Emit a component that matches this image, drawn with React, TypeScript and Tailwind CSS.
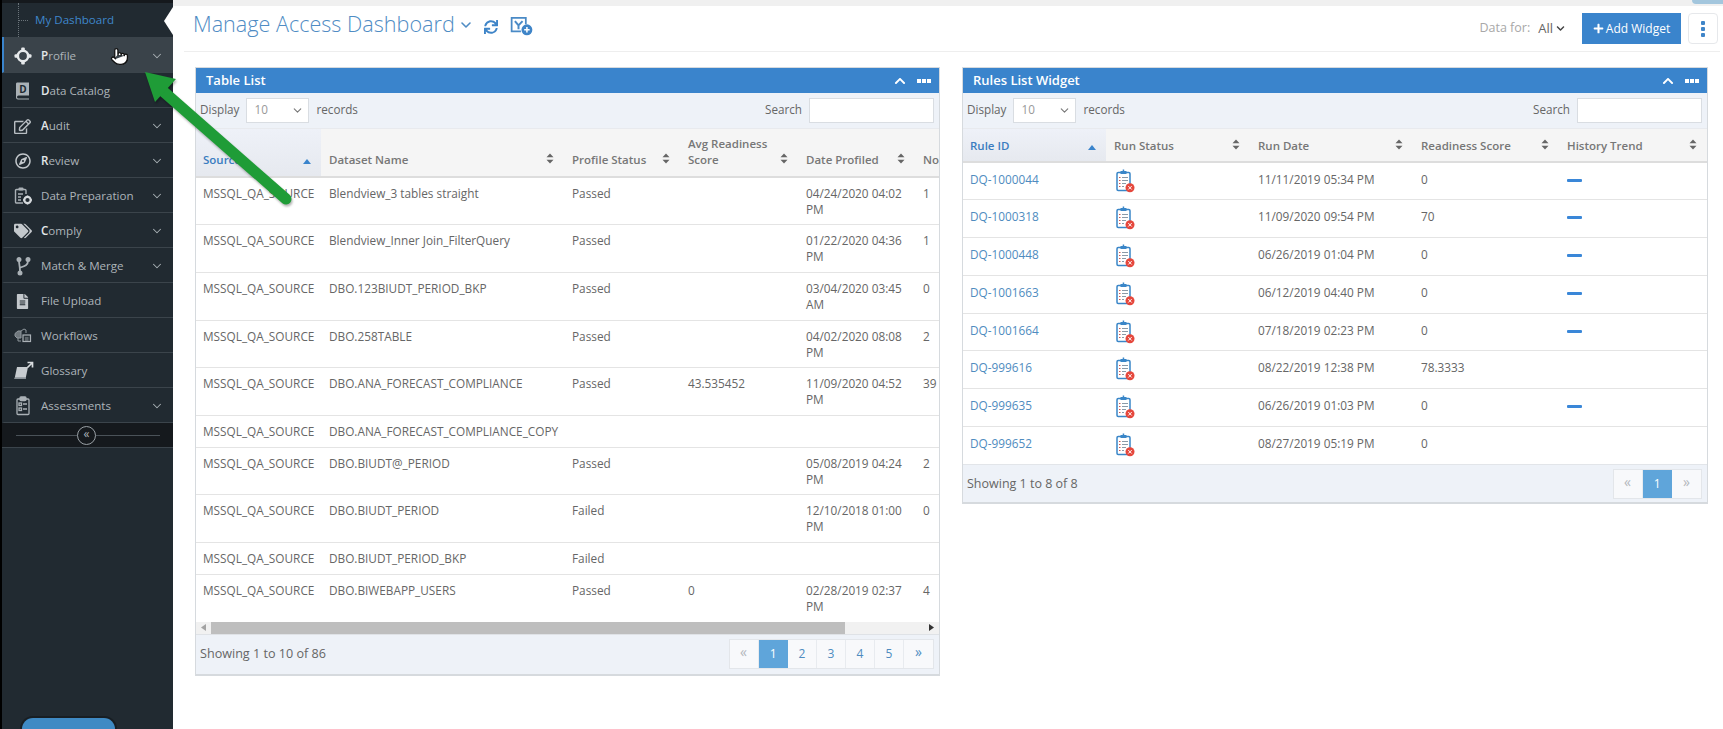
import React from "react";
import { ChevronDown, Pointer } from "lucide-react";
import { FaRegEdit, FaRegCompass, FaTags, FaFileAlt, FaSync, FaPlus, FaChevronUp, FaChevronDown } from "react-icons/fa";

const ProfileIcon = () => (
  <svg width="18" height="18" viewBox="0 0 18 18">
    <circle cx="9" cy="9" r="5.200" fill="none" stroke="#e6e9eb" strokeWidth="2.600" />
    <rect x="7.200" y="0.500" width="3.600" height="4" rx="1" fill="#e6e9eb" />
    <rect x="7.200" y="13.500" width="3.600" height="4" rx="1" fill="#e6e9eb" />
    <rect x="0.500" y="7.200" width="4" height="3.600" rx="1" fill="#e6e9eb" />
    <rect x="13.500" y="7.200" width="4" height="3.600" rx="1" fill="#e6e9eb" />
  </svg>
);
const CatalogIcon = () => (
  <svg width="18" height="20" viewBox="0 0 18 20">
    <path d="M3 1.500h12v13H4.500a1.500 1.500 0 0 0 0 3H15v1H4a2 2 0 0 1-2-2V3a1.500 1.500 0 0 1 1-1.500z" fill="#aab1b6" />
    <text x="9" y="12" textAnchor="middle" fontSize="10" fontWeight="700" fill="#212a31" fontFamily="'Open Sans',sans-serif">D</text>
  </svg>
);
const PrepIcon = () => (
  <svg width="20" height="20" viewBox="0 0 20 20" fill="none">
    <path d="M10 17H3.500A1 1 0 0 1 2.500 16V4.500a1 1 0 0 1 1-1H12a1 1 0 0 1 1 1V8" stroke="#a9b0b5" strokeWidth="1.400" />
    <rect x="5.500" y="1.500" width="5" height="3" rx="1" fill="#a9b0b5" />
    <path d="M5 8h5M5 11h3M5 14h3" stroke="#a9b0b5" strokeWidth="1.300" />
    <circle cx="14.500" cy="14" r="3.200" stroke="#d5d9dc" strokeWidth="2.200" />
    <path d="M14.500 9.500v1.500M14.500 17v1.500M10 14h1.500M17.500 14H19" stroke="#d5d9dc" strokeWidth="1.500" />
  </svg>
);
const MergeIcon = () => (
  <svg width="18" height="20" viewBox="0 0 18 20" fill="none" stroke="#aab1b6" strokeWidth="1.800">
    <circle cx="5" cy="3.500" r="1.600" fill="#aab1b6" />
    <circle cx="14" cy="3.500" r="1.600" fill="#aab1b6" />
    <circle cx="6" cy="17" r="1.600" fill="#aab1b6" />
    <path d="M5 5c0 3 1 5 1 10.500M14 5c0 4-3 5-7.500 6.500" />
  </svg>
);
const WorkflowIcon = () => (
  <svg width="18" height="16" viewBox="0 0 18 16" fill="none" stroke="#8f979d" strokeWidth="1">
    <path d="M1 5.500 4 3h3v7H3L1 8z" fill="#6f777d" />
    <path d="M7 3l3-2 2 1v3" />
    <rect x="9" y="7" width="7.500" height="6.500" fill="#2a3339" stroke="#aab1b6" strokeWidth="1.200" />
    <path d="M11 10h3.500M11 12h3.500" />
    <path d="M4 10v3h3" />
  </svg>
);
const GlossaryIcon = () => (
  <svg width="22" height="22" viewBox="0 0 22 22">
    <path d="M5 7h11l-2.500 12H2.500z" fill="#c7ccd0" />
    <path d="M2.500 19h11l.5-1.700H3z" fill="#8a9298" />
    <path d="M15.500 2.500h5v5M20.500 2.500l-5 5" fill="none" stroke="#d8dcdf" strokeWidth="1.700" />
  </svg>
);
const AssessIcon = () => (
  <svg width="16" height="20" viewBox="0 0 16 20" fill="none" stroke="#aab1b6" strokeWidth="1.300">
    <rect x="2" y="3" width="12" height="15.500" rx="1" />
    <rect x="5" y="1" width="6" height="3.500" rx="1" fill="#aab1b6" />
    <rect x="4" y="7" width="2.500" height="2.500" />
    <rect x="4" y="12" width="2.500" height="2.500" />
    <path d="M8 8h4M8 13h4" />
  </svg>
);

const SortBoth = () => (
  <svg width="8" height="11" viewBox="0 0 8 11" className="shrink-0">
    <path d="M4 0.500 7.500 4.300H.5zM4 10.500.5 6.700h7z" fill="#666" />
  </svg>
);
const SortUp = () => (
  <svg width="8" height="5" viewBox="0 0 8 5" className="shrink-0">
    <path d="M4 0 8 5H0z" fill="#3a84cc" />
  </svg>
);
const StatusIcon = () => (
  <svg width="19" height="24" viewBox="0 0 19 24" fill="none">
    <rect x="1" y="3.500" width="13" height="18" rx="1.200" fill="#fff" stroke="#3a86c8" strokeWidth="1.500" />
    <rect x="4.500" y="2" width="6" height="3" fill="#3a86c8" />
    <rect x="6.700" y="0.500" width="1.500" height="2" fill="#3a86c8" />
    <path d="M6 8.500h6M6 11.500h6M6 14.500h4M6 17.500h2" stroke="#8a9aa8" strokeWidth="1.100" />
    <path d="M3 8.500h1.500M3 11.500h1.500M3 14.500h1.500M3 17.500h1.500" stroke="#d0564f" strokeWidth="1.200" />
    <circle cx="14" cy="18.800" r="4.500" fill="#e5473c" />
    <path d="M12.300 17.100l3.400 3.400M15.700 17.100l-3.400 3.400" stroke="#fff" strokeWidth="1" />
  </svg>
);

const MENU: { label: string; icon: React.ReactNode; chevron: boolean; bright?: boolean; active?: boolean }[] = [
  { label: "Profile", icon: <ProfileIcon />, chevron: true, bright: true, active: true },
  { label: "Data Catalog", icon: <CatalogIcon />, chevron: false, bright: true },
  { label: "Audit", icon: <FaRegEdit size={17} color="#b8bec3" />, chevron: true, bright: true },
  { label: "Review", icon: <FaRegCompass size={16} color="#c3c8cc" />, chevron: true, bright: true },
  { label: "Data Preparation", icon: <PrepIcon />, chevron: true },
  { label: "Comply", icon: <FaTags size={18} color="#c3c8cc" />, chevron: true, bright: true },
  { label: "Match & Merge", icon: <MergeIcon />, chevron: true },
  { label: "File Upload", icon: <FaFileAlt size={15} color="#c3c8cc" />, chevron: false },
  { label: "Workflows", icon: <WorkflowIcon />, chevron: false },
  { label: "Glossary", icon: <GlossaryIcon />, chevron: false },
  { label: "Assessments", icon: <AssessIcon />, chevron: true },
];

function MenuRow({ item }: { item: (typeof MENU)[number] }) {
  return (
    <div
      className={`shrink-0 pt-[2px] flex items-center border-b border-[#3b444b] ${
        item.active ? "h-[36px] bg-[#3a434a] border-l-2 border-l-[#3a84cc]" : "h-[35px] border-l-2 border-l-transparent"
      }`}
    >
      <span className="w-[36px] pl-[1px] flex justify-center shrink-0">{item.icon}</span>
      <span className="text-[11.6px] leading-none text-[#adb4b9] whitespace-nowrap ml-[1px]">
        {item.bright ? (
          <>
            <span className="text-[#e4e7e9] font-semibold">{item.label[0]}</span>
            {item.label.slice(1)}
          </>
        ) : (
          item.label
        )}
      </span>
      {item.chevron && <ChevronDown size={14} strokeWidth={1.8} color="#a9b0b5" className="ml-auto mr-[9px]" />}
    </div>
  );
}

function Sidebar() {
  return (
    <aside className="w-[173px] shrink-0 h-full flex flex-col bg-[#212a31] border-l-2 border-black">
      <div className="h-[3px] shrink-0 bg-[#15191d]" />
      <div className="relative h-[34px] shrink-0 flex items-center">
        <span className="absolute left-[16px] top-0 bottom-0 border-l border-dotted border-[#6b747a]" />
        <span className="absolute left-[17px] top-[17px] w-[9px] border-t border-dotted border-[#6b747a]" />
        <span className="text-[11.6px] text-[#3f87cb] ml-[33px]">My Dashboard</span>
        <span className="absolute right-0 top-[4px] w-0 h-0 border-y-[14px] border-y-transparent border-r-[9px] border-r-white" />
      </div>
      {MENU.map((m) => (
        <MenuRow key={m.label} item={m} />
      ))}
      <div className="relative h-[25px] shrink-0 flex items-center justify-center pr-[2px] bg-[#15191d] border-b border-[#3b444b]">
        <span className="absolute left-[14px] right-[13px] top-[12px] border-t border-[#4a5258]" />
        <span className="relative w-[19px] h-[19px] rounded-full border border-[#9aa1a6] bg-[#15191d] flex items-center justify-center text-[12px] leading-none pb-[2px] text-[#aab1b6]">
          «
        </span>
      </div>
      <div className="mt-auto ml-[20px] w-[93px] h-[11px] rounded-t-[16px] bg-[#3f8ac4] ring-2 ring-[#181e23]" />
    </aside>
  );
}

function DisplayBar() {
  return (
    <div className="h-[36px] bg-[#eef2f8] flex items-center pl-[4px] pr-[5px] pb-[1px] text-[11.7px] text-[#666] border-b border-[#e8eaee]">
      <span>Display</span>
      <div className="ml-[7px] w-[63px] h-[25px] bg-white border border-[#d9dde2] flex items-center pl-[7px] pr-[4px] text-[#999]">
        10
        <ChevronDown size={13} strokeWidth={2} color="#777" className="ml-auto" />
      </div>
      <span className="ml-[7px]">records</span>
      <span className="ml-auto mr-[7px]">Search</span>
      <input aria-label="Search" className="w-[125px] h-[25px] bg-white border border-[#d9dde2] outline-none" />
    </div>
  );
}

function WidgetHead({ title }: { title: string }) {
  return (
    <div className="h-[25px] bg-[#3a84cc] flex items-center pl-[10px] pr-[8px] text-white text-[13px] font-semibold">
      {title}
      <FaChevronUp size={12} className="ml-auto mr-[11px]" />
      <span className="flex gap-[1px]">
        <span className="w-[4px] h-[4px] bg-white" />
        <span className="w-[4px] h-[4px] bg-white" />
        <span className="w-[4px] h-[4px] bg-white" />
      </span>
    </div>
  );
}

function Pager({ pages, nextOff = false }: { pages: number[]; nextOff?: boolean }) {
  const cell = "h-[28px] flex items-center justify-center border-r border-[#e8ebef] bg-[#f8f9fb] text-[12px]";
  return (
    <div className="flex border border-[#e3e6ea]">
      <span className={`${cell} w-[29px] pb-[5px] text-[14px] text-[#b3b7bb]`}>«</span>
      {pages.map((p) => (
        <span
          key={p}
          className={
            p === 1
              ? "h-[28px] w-[29.500px] flex items-center justify-center bg-[#5fa5da] text-white text-[12px]"
              : `${cell} w-[29px] text-[#4f8cc0]`
          }
        >
          {p}
        </span>
      ))}
      <span className={`${cell} w-[29px] pb-[5px] text-[14px] border-r-0 ${nextOff ? "text-[#b3b7bb]" : "text-[#4f8cc0]"}`}>»</span>
    </div>
  );
}

type Row = { src: string; name: string; status: string; score: string; date: string; time: string; no: string };
const ROWS: Row[] = [
  { src: "MSSQL_QA_SOURCE", name: "Blendview_3 tables straight", status: "Passed", score: "", date: "04/24/2020 04:02", time: "PM", no: "1" },
  { src: "MSSQL_QA_SOURCE", name: "Blendview_Inner Join_FilterQuery", status: "Passed", score: "", date: "01/22/2020 04:36", time: "PM", no: "1" },
  { src: "MSSQL_QA_SOURCE", name: "DBO.123BIUDT_PERIOD_BKP", status: "Passed", score: "", date: "03/04/2020 03:45", time: "AM", no: "0" },
  { src: "MSSQL_QA_SOURCE", name: "DBO.258TABLE", status: "Passed", score: "", date: "04/02/2020 08:08", time: "PM", no: "2" },
  { src: "MSSQL_QA_SOURCE", name: "DBO.ANA_FORECAST_COMPLIANCE", status: "Passed", score: "43.535452", date: "11/09/2020 04:52", time: "PM", no: "39" },
  { src: "MSSQL_QA_SOURCE", name: "DBO.ANA_FORECAST_COMPLIANCE_COPY", status: "", score: "", date: "", time: "", no: "" },
  { src: "MSSQL_QA_SOURCE", name: "DBO.BIUDT@_PERIOD", status: "Passed", score: "", date: "05/08/2019 04:24", time: "PM", no: "2" },
  { src: "MSSQL_QA_SOURCE", name: "DBO.BIUDT_PERIOD", status: "Failed", score: "", date: "12/10/2018 01:00", time: "PM", no: "0" },
  { src: "MSSQL_QA_SOURCE", name: "DBO.BIUDT_PERIOD_BKP", status: "Failed", score: "", date: "", time: "", no: "" },
  { src: "MSSQL_QA_SOURCE", name: "DBO.BIWEBAPP_USERS", status: "Passed", score: "0", date: "02/28/2019 02:37", time: "PM", no: "4" },
];

const tdBase = "align-top pr-[6px] text-[11.8px] leading-[16px]";
const td = `${tdBase} pt-[8px] pl-[8px] text-[#666]`;
const tdList = `${tdBase} pt-[7px] pl-[8px] text-[#666]`;

function Th({ children, first, noIcon, tall }: { children: React.ReactNode; first?: boolean; noIcon?: boolean; tall?: boolean }) {
  return (
    <th
      className={`p-0 align-bottom font-semibold text-left text-[11.5px] leading-[16px] border-b-2 border-[#dddddd] ${
        first ? "bg-gradient-to-b from-[#eef1f8] to-[#e6e9ef] text-[#3a7cc0]" : "bg-[#f5f5f5] text-[#777]"
      }`}
    >
      <div className={`flex items-end pr-[10px] ${tall ? "pb-[8px]" : "pb-[7px]"} ${first ? "pl-[7px]" : "pl-[8px]"}`}>
        <span className="flex-1">{children}</span>
        {!noIcon && <span className="pb-[4px]">{first ? <SortUp /> : <SortBoth />}</span>}
      </div>
    </th>
  );
}

function TableList() {
  return (
    <section className="w-[745px] shrink-0 border border-[#d6dade] border-b-2 overflow-hidden">
      <WidgetHead title="Table List" />
      <DisplayBar />
      <div className="overflow-hidden">
        <table className="table-fixed border-collapse w-[844px]">
          <colgroup>
            <col className="w-[125px]" />
            <col className="w-[243px]" />
            <col className="w-[116px]" />
            <col className="w-[118px]" />
            <col className="w-[117px]" />
            <col className="w-[125px]" />
          </colgroup>
          <thead>
            <tr className="h-[48px]">
              <Th tall first>Source</Th>
              <Th tall>Dataset Name</Th>
              <Th tall>Profile Status</Th>
              <Th tall>
                Avg Readiness
                <br />
                Score
              </Th>
              <Th tall>Date Profiled</Th>
              <Th tall noIcon>No</Th>
            </tr>
          </thead>
          <tbody>
            {ROWS.map((r) => (
              <tr key={r.name} className={`border-b border-[#e4e4e4] last:border-b-0 ${r.time ? "h-[47.7px]" : "h-[31.7px]"}`}>
                <td className={`${tdBase} pt-[7px] pl-[7px] text-[#666] whitespace-nowrap`}>{r.src}</td>
                <td className={`${tdList} whitespace-nowrap`}>{r.name}</td>
                <td className={tdList}>{r.status}</td>
                <td className={tdList}>{r.score}</td>
                <td className={tdList}>
                  {r.date}
                  {r.time && <br />}
                  {r.time}
                </td>
                <td className={tdList}>{r.no}</td>
              </tr>
            ))}
          </tbody>
        </table>
      </div>
      <div className="h-[13px] bg-[#f1f1f1] flex items-center border-b border-[#dfe2e6]">
        <span className="w-[15px] flex justify-center">
          <svg width="5" height="7" viewBox="0 0 5 7"><path d="M5 0v7L0 3.500z" fill="#a3a3a3" /></svg>
        </span>
        <span className="w-[634px] h-full bg-[#bebebe]" />
        <span className="ml-auto w-[15px] flex justify-center">
          <svg width="5" height="7" viewBox="0 0 5 7"><path d="M0 0v7l5-3.500z" fill="#333" /></svg>
        </span>
      </div>
      <div className="h-[39px] bg-[#eef2f8] flex items-center pl-[4px] pr-[5px] text-[12.6px] text-[#666]">
        Showing 1 to 10 of 86
        <span className="ml-auto">
          <Pager pages={[1, 2, 3, 4, 5]} />
        </span>
      </div>
    </section>
  );
}

const RULES: [string, string, string, boolean][] = [
  ["DQ-1000044", "11/11/2019 05:34 PM", "0", true],
  ["DQ-1000318", "11/09/2020 09:54 PM", "70", true],
  ["DQ-1000448", "06/26/2019 01:04 PM", "0", true],
  ["DQ-1001663", "06/12/2019 04:40 PM", "0", true],
  ["DQ-1001664", "07/18/2019 02:23 PM", "0", true],
  ["DQ-999616", "08/22/2019 12:38 PM", "78.3333", false],
  ["DQ-999635", "06/26/2019 01:03 PM", "0", true],
  ["DQ-999652", "08/27/2019 05:19 PM", "0", false],
];

function RulesList() {
  return (
    <section className="w-[746px] shrink-0 self-start border border-[#d6dade] border-b-2">
      <WidgetHead title="Rules List Widget" />
      <DisplayBar />
      <table className="table-fixed border-collapse w-full">
        <colgroup>
          <col className="w-[143px]" />
          <col className="w-[144px]" />
          <col className="w-[163px]" />
          <col className="w-[146px]" />
          <col className="w-[148px]" />
        </colgroup>
        <thead>
          <tr className="h-[33px]">
            <Th first>Rule ID</Th>
            <Th>Run Status</Th>
            <Th>Run Date</Th>
            <Th>Readiness Score</Th>
            <Th>History Trend</Th>
          </tr>
        </thead>
        <tbody>
          {RULES.map(([id, date, score, trend]) => (
            <tr key={id} className="h-[37.8px] border-b border-[#e4e4e4] last:border-b-0">
              <td className={`${tdBase} pt-[8px] pl-[7px] text-[#4f8cc0]`}>{id}</td>
              <td className="align-top pl-[10px] pt-[6px]">
                <StatusIcon />
              </td>
              <td className={td}>{date}</td>
              <td className={td}>{score}</td>
              <td className={td}>{trend && <div className="w-[15px] h-[3px] mt-[8px] bg-[#3a87d8] rounded-[1px]" />}</td>
            </tr>
          ))}
        </tbody>
      </table>
      <div className="h-[38px] bg-[#eef2f8] border-t border-[#e2e5e9] flex items-center pl-[4px] pr-[5px] text-[12.5px] text-[#666]">
        Showing 1 to 8 of 8
        <span className="ml-auto">
          <Pager pages={[1]} nextOff />
        </span>
      </div>
    </section>
  );
}

function Header() {
  return (
    <header className="h-[46px] shrink-0 ml-[11px] mr-[3px] flex items-center border-b border-[#eeeeee]">
      <div className="flex items-center mb-[4px]">
        <h1 className="ml-[9px] mb-[5px] text-[21.600px] leading-none font-light text-[#4f8cc4] whitespace-nowrap">Manage Access Dashboard</h1>
        <ChevronDown size={16} strokeWidth={2.400} color="#4f8cc4" className="ml-[3px] mb-[3px]" />
        <FaSync size={14} color="#3f85c8" className="ml-[10px]" />
        <svg width="24" height="21" viewBox="0 0 22 19" fill="none" className="ml-[12px]">
          <path d="M10 14H1.500V1.500h13v6" stroke="#4a8ac6" strokeWidth="1.600" />
          <path d="M4.500 4.500 7.800 8.500v3.500M11.500 4.500 7.800 8.500" stroke="#4a8ac6" strokeWidth="1.800" />
          <circle cx="15.500" cy="12.500" r="5" fill="#3f85c8" />
          <path d="M15.500 10v5M13 12.500h5" stroke="#fff" strokeWidth="1.400" />
        </svg>
      </div>
      <span className="ml-auto text-[12.5px] text-[#a8a8a8]">Data for:</span>
      <span className="ml-[8px] text-[13px] text-[#666]">All</span>
      <FaChevronDown size={9} color="#444" className="ml-[3px]" />
      <button className="ml-[17px] w-[99px] h-[31px] bg-[#3a84cc] text-white text-[12px] flex items-center justify-center gap-[2px]">
        <FaPlus size={11} />
        Add Widget
      </button>
      <button aria-label="More" className="ml-[7px] w-[30px] h-[31px] rounded-[4px] border border-[#e6e8eb] flex flex-col items-center justify-center gap-[2px] mr-[2px]">
        <span className="w-[4px] h-[4px] rounded-[1px] bg-[#3f85c8]" />
        <span className="w-[4px] h-[4px] rounded-[1px] bg-[#3f85c8]" />
        <span className="w-[4px] h-[4px] rounded-[1px] bg-[#3f85c8]" />
      </button>
    </header>
  );
}

export default function App() {
  return (
    <div className="relative w-[1723px] h-[729px] overflow-hidden flex bg-white font-['Open_Sans',sans-serif]">
      <Sidebar />
      <main className="flex-1 min-w-0 flex flex-col">
        <div className="h-[6px] shrink-0 bg-[#f0f0f0] flex justify-end">
          <span className="w-[31px] h-[4px] bg-[#a3c6dd] rounded-bl-[6px]" />
        </div>
        <Header />
        <div className="flex gap-[22px] pl-[22px] pt-[15px]">
          <TableList />
          <RulesList />
        </div>
      </main>

      <Pointer size={19} fill="#fff" stroke="#111" strokeWidth={1.600} className="absolute left-[110px] top-[47px]" />

      <svg width="180" height="150" viewBox="0 0 180 150" className="absolute left-[130px] top-[62px] drop-shadow-[1px_2px_1px_rgba(0,0,0,0.3)]">
        <path d="M34 30 156 137" stroke="#1f9c37" strokeWidth="11" strokeLinecap="round" />
        <path d="M15 10 46 17 25 40z" fill="#1f9c37" />
      </svg>
    </div>
  );
}
